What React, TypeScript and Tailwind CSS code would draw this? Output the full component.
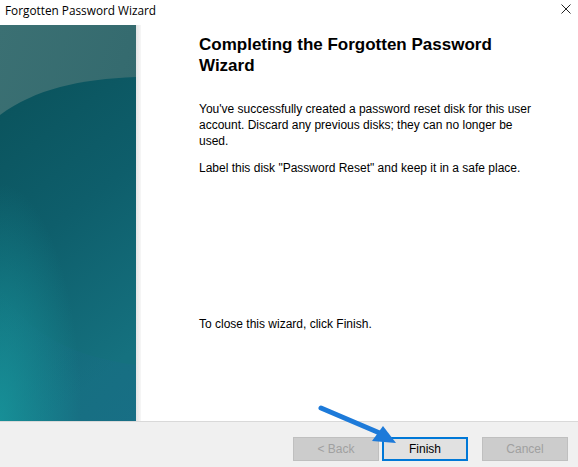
import React from "react";

function SidePanel() {
  return (
    <svg width="136" height="396" viewBox="0 0 136 396" className="block">
      <defs>
        <linearGradient id="top" x1="0" y1="0" x2="1" y2="1">
          <stop offset="0" stopColor="#3b7073" />
          <stop offset="1" stopColor="#2f666b" />
        </linearGradient>
        <linearGradient id="main" x1="0" y1="0" x2="0.3" y2="1">
          <stop offset="0" stopColor="#0a525b" />
          <stop offset="0.5" stopColor="#0e5e6b" />
          <stop offset="1" stopColor="#15717f" />
        </linearGradient>
        <radialGradient id="glow" cx="0" cy="1" r="0.6">
          <stop offset="0" stopColor="#17939a" stopOpacity="0.9" />
          <stop offset="1" stopColor="#17939a" stopOpacity="0" />
        </radialGradient>
        <linearGradient id="br" x1="0" y1="0" x2="1" y2="1">
          <stop offset="0" stopColor="#176a80" stopOpacity="0" />
          <stop offset="1" stopColor="#1b6c8c" stopOpacity="0.8" />
        </linearGradient>
      </defs>
      <rect width="136" height="396" fill="url(#top)" />
      <path d="M0 90 C 35 64, 80 54, 136 52 L136 396 L0 396 Z" fill="url(#main)" />
      <path d="M0 260 C 20 300, 60 330, 136 340 L136 396 L0 396 Z" fill="url(#br)" opacity="0.6" />
      <rect width="136" height="396" fill="url(#glow)" />
    </svg>
  );
}

function Btn({ label, disabled, primary }: { label: string; disabled?: boolean; primary?: boolean }) {
  if (primary) {
    return (
      <div className="w-[86px] h-[24px] border-2 border-[#0078d7] bg-[#e1e1e1] flex items-center justify-center text-[12px] text-black">
        {label}
      </div>
    );
  }
  return (
    <div
      className={
        "w-[86px] h-[24px] border border-[#bfbfbf] bg-[#cccccc] flex items-center justify-center text-[12px] " +
        (disabled ? "text-[#a0a0a0]" : "text-black")
      }
    >
      {label}
    </div>
  );
}

export default function App() {
  return (
    <div
      className="relative w-[578px] h-[467px] bg-white overflow-hidden flex flex-col"
      style={{ fontFamily: "Arial, 'Liberation Sans', sans-serif" }}
    >
      {/* Title bar */}
      <div className="h-[25px] flex items-start justify-between pl-[5px] pr-[7px] shrink-0">
        <span
          className="text-[11.8px] leading-[20px] text-black"
          style={{ fontFamily: "'Open Sans', 'Noto Sans', sans-serif" }}
        >
          Forgotten Password Wizard
        </span>
        <svg width="10" height="10" viewBox="0 0 10 10" className="mt-[4px]">
          <path d="M0.5 0.5 L9.5 9.5 M9.5 0.5 L0.5 9.5" stroke="#222" strokeWidth="1" />
        </svg>
      </div>

      {/* Body */}
      <div className="flex h-[396px] shrink-0">
        <SidePanel />
        <div className="w-[5px] bg-gradient-to-r from-[#e4e4e4] to-[#f7f7f7]" />
        <div className="flex-1 flex flex-col pl-[58px] pt-[9px] pr-[20px]">
          <h1 className="text-[17px] leading-[21px] font-bold text-black whitespace-nowrap">
            Completing the Forgotten Password
            <br />
            Wizard
          </h1>
          <p className="mt-[25px] text-[12px] leading-[16px] text-black whitespace-nowrap">
            You've successfully created a password reset disk for this user
            <br />
            account. Discard any previous disks; they can no longer be
            <br />
            used.
          </p>
          <p className="mt-[11px] text-[12px] leading-[16px] text-black">
            Label this disk "Password Reset" and keep it in a safe place.
          </p>
          <p className="mt-[140px] text-[12px] leading-[16px] text-black">To close this wizard, click Finish.</p>
        </div>
      </div>

      {/* Bottom bar */}
      <div className="flex-1 border-t border-[#d9d9d9] bg-[#f0f0f0] flex items-start pt-[15px] pl-[293px]">
        <Btn label="< Back" disabled />
        <div className="w-[3px]" />
        <Btn label="Finish" primary />
        <div className="w-[14px]" />
        <Btn label="Cancel" disabled />
      </div>

      {/* Annotation arrow */}
      <svg className="absolute left-0 top-0 pointer-events-none" width="578" height="467">
        <line x1="321" y1="408" x2="382" y2="434" stroke="#1d7ad9" strokeWidth="5" strokeLinecap="round" />
        <polygon points="396,443 372,441 383,426" fill="#1d7ad9" />
      </svg>
    </div>
  );
}
